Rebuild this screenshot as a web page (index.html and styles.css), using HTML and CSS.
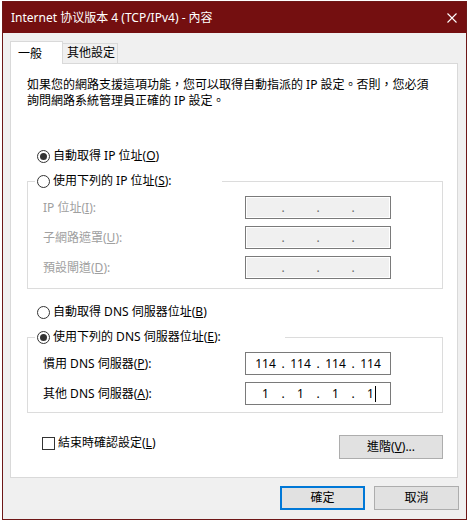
FILE: index.html
```html
<!DOCTYPE html>
<html lang="zh-Hant">
<head>
<meta charset="utf-8">
<title>Internet 协议版本 4 (TCP/IPv4) - 內容</title>
<link rel="stylesheet" href="styles.css">
</head>
<body>
<div class="window">
  <div class="titlebar">
    <span class="title">Internet 协议版本 4 (TCP/IPv4) - 內容</span>
    <svg class="close" width="10" height="10" viewBox="0 0 10 10"><path d="M0.5 0.5 L9.5 9.5 M9.5 0.5 L0.5 9.5" stroke="#fff" stroke-width="1.1" fill="none"/></svg>
  </div>
  <div class="body">
    <div class="tabs">
      <div class="tab active">一般</div>
      <div class="tab">其他設定</div>
    </div>
    <div class="panel">
      <p class="desc">如果您的網路支援這項功能，您可以取得自動指派的 IP 設定。否則，您必須<br>詢問網路系統管理員正確的 IP 設定。</p>

      <div class="radio-row auto-ip"><span class="radio on"></span><span>自動取得 IP 位址(<u>O</u>)</span></div>

      <div class="group ip-group">
        <div class="legend ip-legend"><span class="radio"></span><span>使用下列的 IP 位址(<u>S</u>):</span></div>
        <div class="fields">
          <span class="lbl disabled">IP 位址(<u>I</u>):</span>
          <div class="ipbox off"><span class="seg"></span><span class="dot">.</span><span class="seg"></span><span class="dot">.</span><span class="seg"></span><span class="dot">.</span><span class="seg"></span></div>
          <span class="lbl disabled">子網路遮罩(<u>U</u>):</span>
          <div class="ipbox off"><span class="seg"></span><span class="dot">.</span><span class="seg"></span><span class="dot">.</span><span class="seg"></span><span class="dot">.</span><span class="seg"></span></div>
          <span class="lbl disabled">預設閘道(<u>D</u>):</span>
          <div class="ipbox off"><span class="seg"></span><span class="dot">.</span><span class="seg"></span><span class="dot">.</span><span class="seg"></span><span class="dot">.</span><span class="seg"></span></div>
        </div>
      </div>

      <div class="radio-row auto-dns"><span class="radio"></span><span>自動取得 DNS 伺服器位址(<u>B</u>)</span></div>

      <div class="group dns-group">
        <div class="legend dns-legend"><span class="radio on"></span><span>使用下列的 DNS 伺服器位址(<u>E</u>):</span></div>
        <div class="fields">
          <span class="lbl">慣用 DNS 伺服器(<u>P</u>):</span>
          <div class="ipbox"><span class="seg">114</span><span class="dot">.</span><span class="seg">114</span><span class="dot">.</span><span class="seg">114</span><span class="dot">.</span><span class="seg">114</span></div>
          <span class="lbl">其他 DNS 伺服器(<u>A</u>):</span>
          <div class="ipbox"><span class="seg">1</span><span class="dot">.</span><span class="seg">1</span><span class="dot">.</span><span class="seg">1</span><span class="dot">.</span><span class="seg">1<span class="caret"></span></span></div>
        </div>
      </div>

      <div class="bottom-row">
        <div class="check-row"><span class="checkbox"></span><span>結束時確認設定(<u>L</u>)</span></div>
        <button class="btn advanced">進階(<u>V</u>)...</button>
      </div>
    </div>
    <div class="actions">
      <button class="btn ok">確定</button>
      <button class="btn">取消</button>
    </div>
  </div>
</div>
</body>
</html>
```
FILE: styles.css
```css
html, body {
  margin: 0;
  padding: 0;
  background: #ffffff;
}
body {
  font-family: "Noto Sans", "Noto Sans CJK TC", sans-serif;
  font-size: 12px;
  line-height: 16px;
  color: #000;
}
u { text-decoration: underline; text-underline-offset: 1px; }

.window {
  margin: 1px 0 0 2px;
  width: 465px;
  height: 519px;
  box-sizing: border-box;
  border: 1px solid #6e1717;
  background: #f0f0f0;
  display: flex;
  flex-direction: column;
}
.titlebar {
  height: 31px;
  background: #740f10;
  color: #fff;
  display: flex;
  align-items: center;
  justify-content: space-between;
  padding: 0 9px 0 8px;
  flex: none;
}
.title { white-space: nowrap; }
.close { display: block; }

.body {
  padding-top: 8px;
  display: flex;
  flex-direction: column;
}
.tabs {
  display: flex;
  align-items: flex-end;
  height: 23px;
  margin: 0 0 -1px 7px;
  position: relative;
  z-index: 1;
}
.tab {
  box-sizing: border-box;
  height: 20px;
  margin-bottom: 1px;
  border: 1px solid #d9d9d9;
  border-left: none;
  border-bottom: none;
  background: #f0f0f0;
  padding: 1px 0 0 4px;
  width: 55px;
  white-space: nowrap;
}
.tab.active {
  height: 23px;
  margin-bottom: 0;
  width: 53px;
  border-left: 1px solid #d9d9d9;
  background: #fff;
  padding: 4px 0 0 7px;
}

.panel {
  box-sizing: border-box;
  margin-left: 7px;
  width: 448px;
  height: 415px;
  border: 1px solid #d9d9d9;
  background: #fff;
  padding-top: 13px;
}
.desc {
  margin: 0 0 0 16px;
  white-space: nowrap;
}

.radio-row {
  display: flex;
  align-items: center;
  height: 16px;
  margin-left: 26px;
  white-space: nowrap;
}
.auto-ip { margin-top: 39px; }
.auto-dns { margin-top: 15px; }

.radio {
  box-sizing: border-box;
  width: 13px;
  height: 13px;
  border: 1px solid #333;
  border-radius: 50%;
  margin-right: 3px;
  flex: none;
  display: flex;
  align-items: center;
  justify-content: center;
  background: #fff;
}
.radio.on::after {
  content: "";
  width: 7px;
  height: 7px;
  border-radius: 50%;
  background: #333;
}

.group {
  box-sizing: border-box;
  margin: 17px 0 0 16px;
  width: 416px;
  border: 1px solid #dcdcdc;
}
.ip-group { padding-bottom: 9px; }
.dns-group { padding-bottom: 7px; }
.legend {
  display: flex;
  align-items: center;
  height: 16px;
  margin: -9px 0 0 7px;
  padding-left: 2px;
  background: #fff;
  white-space: nowrap;
}
.ip-legend { width: 185px; }
.dns-legend { width: 248px; }

.fields {
  display: grid;
  grid-template-columns: 202px 146px;
  grid-auto-rows: 23px;
  row-gap: 7px;
  align-items: center;
  margin: 7px 0 0 15px;
}
.lbl { white-space: nowrap; }
.lbl.disabled { color: #a0a0a0; }

.ipbox {
  box-sizing: border-box;
  height: 23px;
  border: 1px solid #7a7a7a;
  background: #fff;
  display: flex;
  justify-content: center;
  align-items: center;
  line-height: 16px;
}
.ipbox.off {
  background: #f0f0f0;
  box-shadow: inset 0 0 0 1px #fff;
  color: #6d6d6d;
}
.seg {
  width: 31px;
  text-align: center;
  display: flex;
  justify-content: center;
  align-items: center;
}
.dot {
  width: 4px;
  text-align: center;
}
.caret {
  display: inline-block;
  width: 1px;
  height: 16px;
  background: #000;
  margin-left: 1px;
  margin-right: -2px;
}

.bottom-row {
  display: flex;
  justify-content: space-between;
  align-items: flex-start;
  margin: 22px 14px 0 31px;
}
.check-row {
  display: flex;
  align-items: center;
  height: 16px;
  white-space: nowrap;
}
.checkbox {
  box-sizing: border-box;
  width: 13px;
  height: 13px;
  border: 1px solid #333;
  background: #fff;
  margin-right: 3px;
}

.btn {
  box-sizing: border-box;
  font: inherit;
  color: #000;
  height: 24px;
  background: #e1e1e1;
  border: 1px solid #adadad;
  padding: 0;
  margin: 0;
  border-radius: 0;
}
.advanced { width: 104px; }

.actions {
  display: flex;
  justify-content: flex-end;
  gap: 9px;
  margin: 8px 7px 0 0;
}
.actions .btn { width: 85px; }
.btn.ok { border: 2px solid #0078d7; }
```
